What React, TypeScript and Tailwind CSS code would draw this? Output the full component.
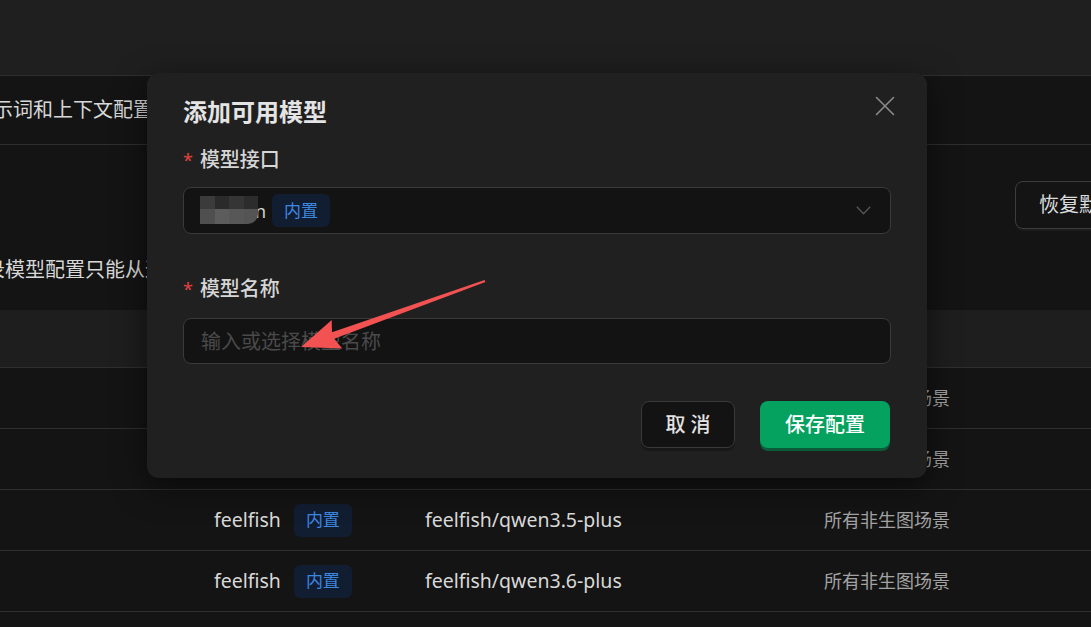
const rows = [
    { source: "feelfish", model: "feelfish/qwen3-max", scene: "所有非生图场景" },
    { source: "feelfish", model: "feelfish/qwen3-plus", scene: "所有非生图场景" },
    { source: "feelfish", model: "feelfish/qwen3.5-plus", scene: "所有非生图场景" },
    { source: "feelfish", model: "feelfish/qwen3.6-plus", scene: "所有非生图场景" },
];

// 打码的马赛克块
const mosaicTop = ["#3b3b3b", "#2a2a2a", "#353535", "#2c2c2c"];
const mosaicBottom = ["#4f4f4f", "#5c5c5c", "#575757", "#545454"];

function Badge() {
    return (
        <span className="inline-flex h-[33px] items-center rounded-[6px] bg-[#111d31] px-[12px] text-[17px] text-[#3d86e0]">
            内置
        </span>
    );
}

function Mosaic() {
    return (
        <div className="relative h-[30px] w-[66px] shrink-0">
            <span className="absolute right-0 top-[2px] text-[18px] leading-[26px] text-[#d0d0d0]">n</span>
            <div className="absolute left-0 top-0 flex w-[58px] flex-col blur-[0.6px]">
                <div className="flex">
                    {mosaicTop.map((c, i) => (
                        <div key={i} className="h-[13px] w-[14.5px]" style={{ backgroundColor: c }} />
                    ))}
                </div>
                <div className="flex overflow-hidden rounded-br-[10px]">
                    {mosaicBottom.map((c, i) => (
                        <div key={i} className="h-[15px] w-[14.5px]" style={{ backgroundColor: c }} />
                    ))}
                </div>
            </div>
        </div>
    );
}

function AddModelDialog() {
    return (
        <div className="absolute left-[147px] top-[73px] flex h-[405px] w-[780px] flex-col rounded-[12px] bg-[#202020] px-[36px] pt-[24px] shadow-[0_8px_32px_rgba(0,0,0,0.55)]">
            <div className="flex h-[30px] items-center justify-between">
                <h2 className="text-[24px] font-bold leading-[30px] text-[#e4e4e4]">添加可用模型</h2>
                <button className="mr-[-4px] mt-[-12px] text-[#8a8a8a]">
                    <svg width="20" height="20" viewBox="0 0 20 20" fill="none" stroke="currentColor" strokeWidth="1.6" strokeLinecap="round">
                        <path d="M1.5 1.5 18.5 18.5M18.5 1.5 1.5 18.5" />
                    </svg>
                </button>
            </div>

            <label className="mt-[20px] flex h-[26px] items-center gap-[7px] text-[20px] font-medium leading-[26px] text-[#d6d6d6]">
                <span className="text-[18px] text-[#d9403c]">*</span>
                模型接口
            </label>
            <div className="mt-[14px] flex h-[47px] items-center rounded-[8px] border border-[#3a3a3a] bg-[#131313] pl-[16px] pr-[19px]">
                <Mosaic />
                <div className="ml-[6px]">
                    <Badge />
                </div>
                <svg className="ml-auto text-[#575757]" width="15" height="9" viewBox="0 0 15 9" fill="none" stroke="currentColor" strokeWidth="1.3">
                    <path d="M0.8 0.8 7.5 7.8 14.2 0.8" />
                </svg>
            </div>

            <label className="mt-[42px] flex h-[26px] items-center gap-[7px] text-[20px] font-medium leading-[26px] text-[#d6d6d6]">
                <span className="text-[18px] text-[#d9403c]">*</span>
                模型名称
            </label>
            <input
                placeholder="输入或选择模型名称"
                className="mt-[16px] h-[46px] w-full rounded-[8px] border border-[#3a3a3a] bg-[#131313] px-[17px] text-[20px] text-[#d6d6d6] outline-none placeholder:text-[#4a4a4a]"
            />

            <div className="mt-[37px] flex justify-end gap-[25px]">
                <button className="h-[47px] w-[94px] rounded-[8px] border border-[#3a3a3a] bg-[#131313] text-[20px] font-medium text-[#e2e2e2] shadow-[0_3px_0_#181818]">
                    取 消
                </button>
                <button className="mr-[1px] h-[47px] w-[130px] rounded-[8px] bg-[#04a15f] text-[20px] font-medium text-white shadow-[0_3px_0_#0b5b3a]">
                    保存配置
                </button>
            </div>
        </div>
    );
}

export default function App() {
    return (
        <div className="relative h-[627px] w-full overflow-hidden bg-[#141414] font-['Noto_Sans','Noto_Sans_CJK_SC',sans-serif]">
            <div className="h-[75px] bg-[#1f1f1f]" />

            <div className="flex h-[70px] items-center whitespace-nowrap border-y border-[#2f2f2f] text-[20px] text-[#d8d8d8]">
                <span className="ml-[-27px]">提示词和上下文配置，可在此处统一管理</span>
            </div>

            <div className="flex h-[165px] whitespace-nowrap">
                <div className="flex w-[1015px] shrink-0 items-end pb-[25px] text-[20px] leading-[30px] text-[#d8d8d8]">
                    <span className="ml-[-35px]">记录模型配置只能从这里修改，请谨慎操作</span>
                </div>
                <button className="mt-[36px] h-[48px] shrink-0 rounded-[8px] border border-[#3d3d3d] bg-[#141414] px-[23px] text-[20px] text-[#dcdcdc] shadow-[0_2px_0_#1c1c1c]">
                    恢复默认配置
                </button>
            </div>

            <div className="h-[58px] border-b border-[#2f2f2f] bg-[#1e1e1e]" />

            {rows.map((r) => (
                <div key={r.model} className="flex h-[61px] items-center whitespace-nowrap border-b border-[#2f2f2f]">
                    <div className="w-[214px] shrink-0" />
                    <div className="flex w-[211px] shrink-0 items-center gap-[13px] text-[19.5px] text-[#d9d9d9]">
                        {r.source}
                        <Badge />
                    </div>
                    <div className="w-[399px] shrink-0 text-[19.5px] text-[#d9d9d9]">{r.model}</div>
                    <div className="text-[18px] text-[#a3a3a3]">{r.scene}</div>
                </div>
            ))}

            <AddModelDialog />

            {/* 截图上的红色标注箭头 */}
            <svg className="pointer-events-none absolute left-0 top-0" width="1091" height="627" viewBox="0 0 1091 627">
                <polygon
                    fill="#f25252"
                    points="301,347 331.7,320.1 332,332.2 484.6,279.9 485.4,282.1 334.2,338.8 342.2,348.6"
                />
            </svg>
        </div>
    );
}
